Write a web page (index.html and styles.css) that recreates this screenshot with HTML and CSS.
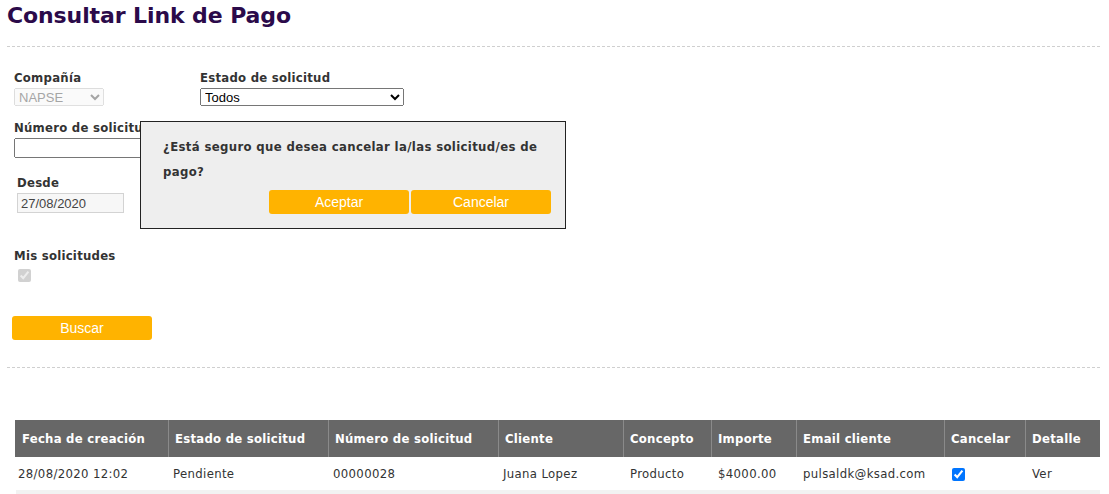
FILE: index.html
```html
<!DOCTYPE html>
<html lang="es">
<head>
    <meta charset="UTF-8">
    <title>Consultar Link de Pago</title>
    <link rel="stylesheet" href="styles.css">
</head>
<body>
    <div class="page">
        <h1>Consultar Link de Pago</h1>
        <div class="separator"></div>

        <div class="filters">
            <div class="filter-row">
                <div class="field field-company">
                    <label>Compañía</label>
                    <select class="select-company" disabled>
                        <option>NAPSE</option>
                    </select>
                </div>
                <div class="field">
                    <label>Estado de solicitud</label>
                    <select class="select-state">
                        <option>Todos</option>
                    </select>
                </div>
            </div>

            <div class="field field-number">
                <label>Número de solicitud</label>
                <input type="text" class="input-number">
            </div>

            <div class="field field-desde">
                <label>Desde</label>
                <input type="text" class="input-date" value="27/08/2020" disabled>
            </div>

            <div class="field field-mine">
                <label>Mis solicitudes</label>
                <input type="checkbox" class="check-mine" checked disabled>
            </div>

            <button class="btn btn-search">Buscar</button>
        </div>

        <div class="separator"></div>

        <table class="results">
            <colgroup>
                <col style="width: 153px">
                <col style="width: 160px">
                <col style="width: 170px">
                <col style="width: 125px">
                <col style="width: 88px">
                <col style="width: 85px">
                <col style="width: 148px">
                <col style="width: 81px">
                <col style="width: 74px">
            </colgroup>
            <thead>
                <tr>
                    <th>Fecha de creación</th>
                    <th>Estado de solicitud</th>
                    <th>Número de solicitud</th>
                    <th>Cliente</th>
                    <th>Concepto</th>
                    <th>Importe</th>
                    <th>Email cliente</th>
                    <th>Cancelar</th>
                    <th>Detalle</th>
                </tr>
            </thead>
            <tbody>
                <tr>
                    <td>28/08/2020 12:02</td>
                    <td>Pendiente</td>
                    <td>00000028</td>
                    <td>Juana Lopez</td>
                    <td class="cell-wide">Producto</td>
                    <td class="cell-wide">$4000.00</td>
                    <td class="cell-wide">pulsaldk@ksad.com</td>
                    <td><input type="checkbox" checked></td>
                    <td class="cell-wide">Ver</td>
                </tr>
                <tr class="row-alt">
                    <td colspan="9"></td>
                </tr>
            </tbody>
        </table>

        <!-- dialogo de confirmacion -->
        <div class="confirm">
            <p class="confirm-text">¿Está seguro que desea cancelar la/las solicitud/es de pago?</p>
            <div class="confirm-actions">
                <button class="btn btn-dialog">Aceptar</button>
                <button class="btn btn-dialog">Cancelar</button>
            </div>
        </div>
    </div>
</body>
</html>
```

FILE: styles.css
```css
* {
    margin: 0;
    padding: 0;
    box-sizing: border-box;
}

body {
    font-family: 'DejaVu Sans Condensed', 'DejaVu Sans', sans-serif;
    font-size: 13px;
    color: #333;
    background: #fff;
}

.page {
    position: relative;
    padding: 0 9px 0 7px;
}

h1 {
    font-family: 'DejaVu Sans', sans-serif;
    font-size: 22px;
    font-weight: bold;
    color: #2b0a4a;
    line-height: 26px;
    padding-top: 3px;
    letter-spacing: -0.1px;
}

.separator {
    border-top: 1px dashed #cfcfcf;
}

h1 + .separator {
    margin-top: 17px;
}

.filters {
    padding: 23px 0 27px 7px;
}

.filter-row {
    display: flex;
}

.field {
    display: flex;
    flex-direction: column;
    align-items: flex-start;
}

.field label {
    font-weight: bold;
    line-height: 16px;
    color: #333;
    letter-spacing: 0.25px;
}

.field-company {
    width: 186px;
}

select,
input[type="text"] {
    font-family: 'Liberation Sans', Arial, sans-serif;
    font-size: 13px;
}

.select-company {
    width: 90px;
    height: 18px;
    margin-top: 2px;
}

.select-state {
    width: 204px;
    height: 18px;
    margin-top: 2px;
    color: #000;
}

.field-number {
    margin-top: 14px;
}

.input-number {
    width: 200px;
    height: 20px;
    margin-top: 2px;
}

.field-desde {
    margin: 17px 0 0 3px;
}

.input-date {
    width: 107px;
    height: 20px;
    margin-top: 2px;
    padding: 0 3px;
    background: #f7f7f7;
    border: 1px solid #d3d3d3;
    color: #444;
}

.field-mine {
    margin-top: 35px;
}

.check-mine {
    width: 13px;
    height: 13px;
    margin: 5px 0 0 4px;
}

.btn {
    font-family: 'Liberation Sans', Arial, sans-serif;
    font-size: 14px;
    color: #fff;
    background: #ffb300;
    border: none;
    border-radius: 3px;
    cursor: pointer;
}

.btn-search {
    width: 140px;
    height: 24px;
    margin: 34px 0 0 -2px;
}

.results {
    margin: 52px 0 0 8px;
    width: 1084px;
    border-collapse: collapse;
    table-layout: fixed;
}

.results th {
    height: 37px;
    background: #676767;
    color: #fff;
    text-align: left;
    font-weight: bold;
    padding: 0 6px;
    border-left: 1px solid #8a8a8a;
    letter-spacing: 0.25px;
    white-space: nowrap;
}

.results th:first-child {
    border-left: 1px solid #676767;
}

.results td {
    height: 33px;
    padding: 0 3px 0 4px;
    color: #333;
    border-left: 1px solid transparent;
    letter-spacing: 0.35px;
    white-space: nowrap;
}

.results td:first-child {
    padding-left: 2px;
}

.results td.cell-wide {
    padding-left: 6px;
}

.results td input {
    width: 13px;
    height: 13px;
    margin: 4px 0 0 3px;
}

.results .row-alt td {
    height: 12px;
    background: #f2f2f2;
}

/* dialogo */
.confirm {
    position: absolute;
    left: 140px;
    top: 121px;
    width: 426px;
    height: 108px;
    background: #eeeeee;
    border: 1px solid #222;
    padding: 12px 14px 0 22px;
}

.confirm-text {
    font-weight: bold;
    line-height: 25px;
    color: #333;
    letter-spacing: 0.35px;
    padding-right: 8px;
}

.confirm-actions {
    display: flex;
    justify-content: flex-end;
    gap: 2px;
    margin-top: 6px;
}

.btn-dialog {
    width: 140px;
    height: 24px;
}
```
